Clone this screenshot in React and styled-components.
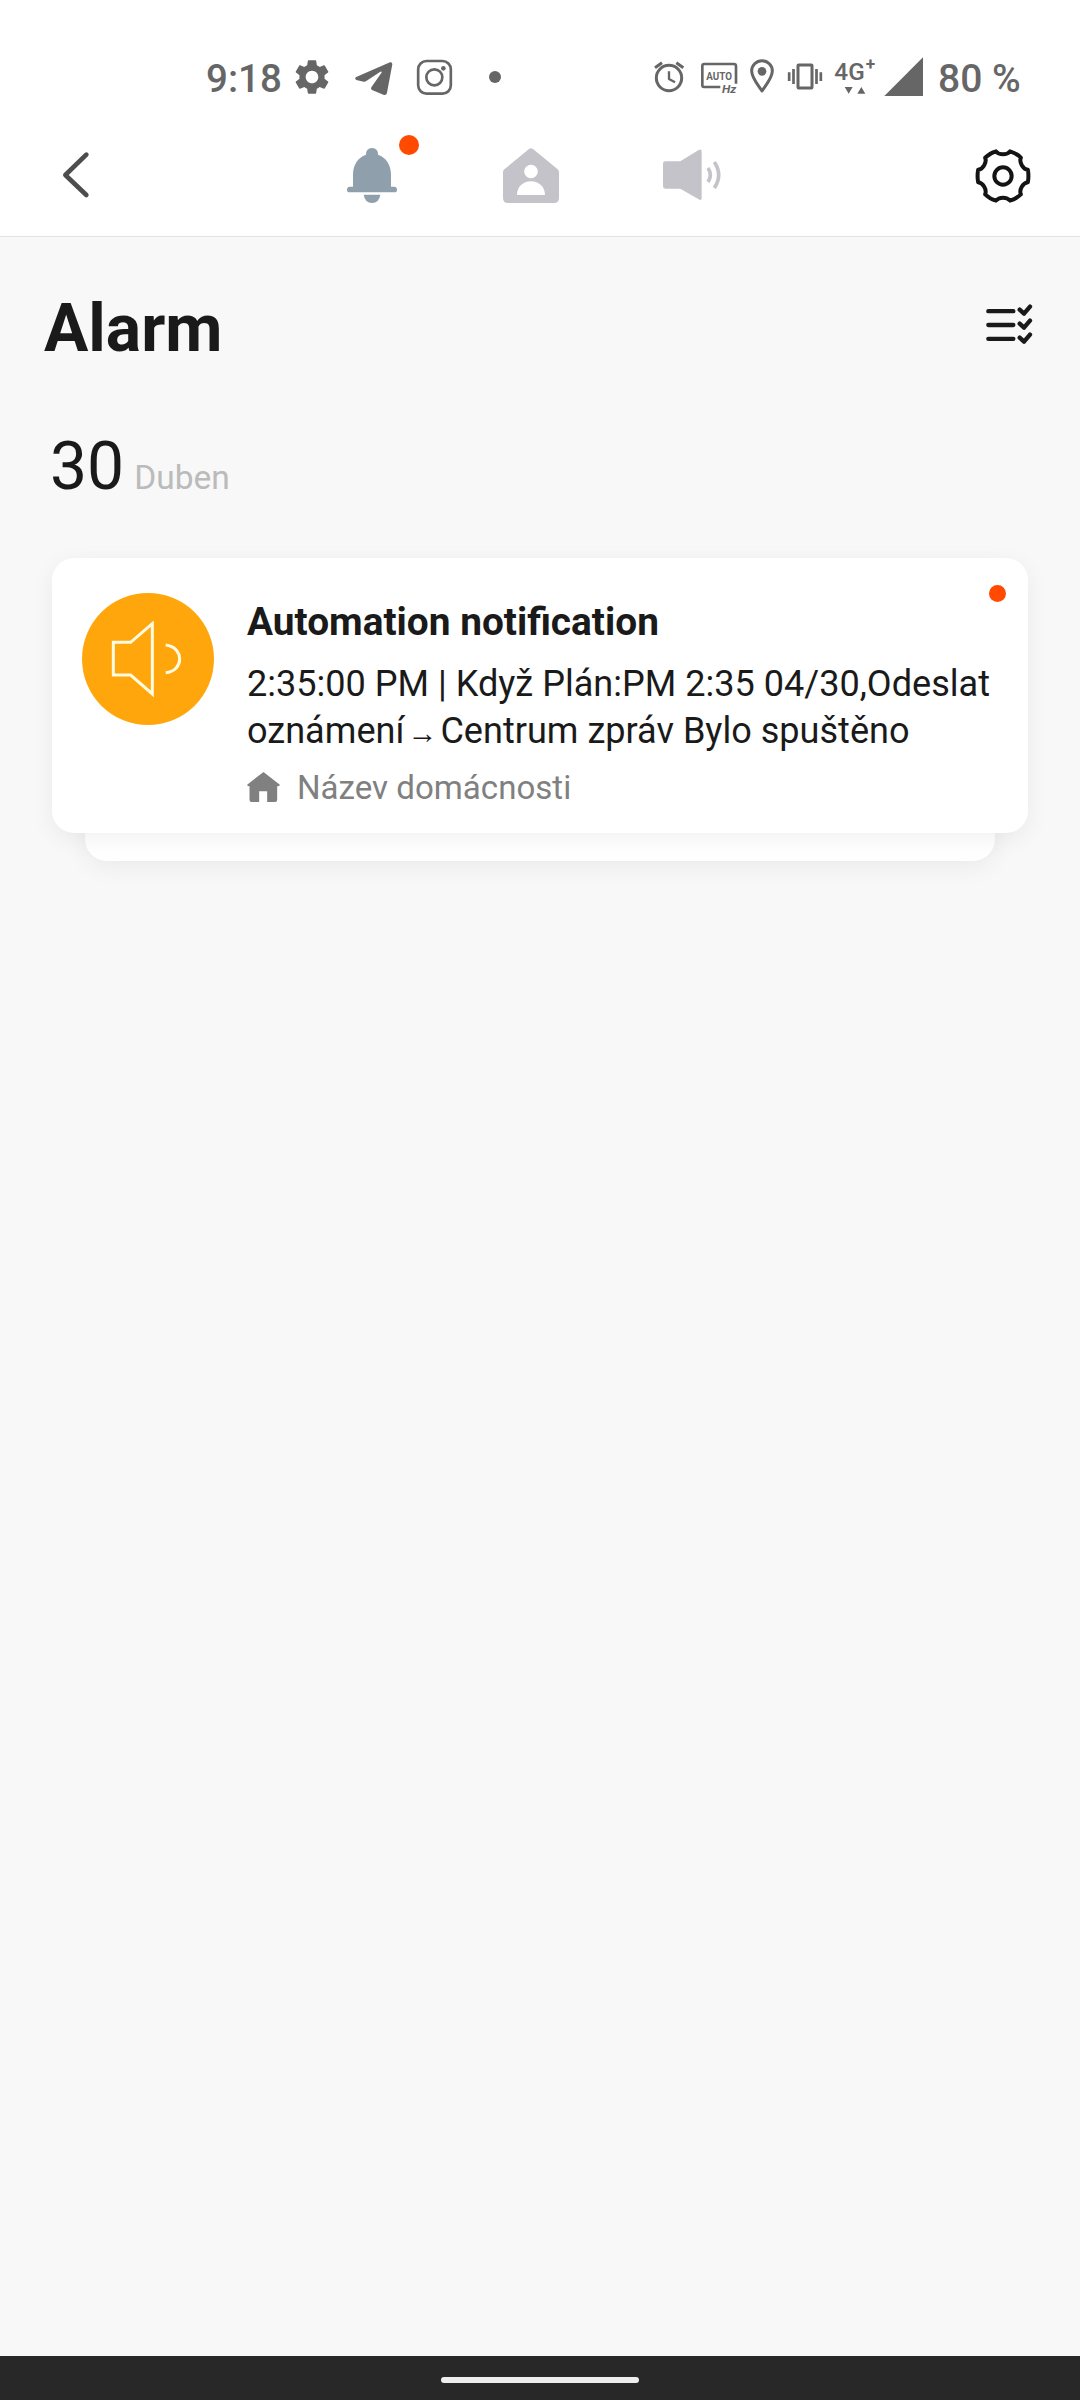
import React from 'react'
import styled, { createGlobalStyle } from 'styled-components'
import { MdSettings } from 'react-icons/md'

function App() {
  return (
    <Screen>
      <GlobalStyle />
      <Header>
        <StatusBar />
        <Toolbar />
      </Header>

      <Main>
        <TitleRow>
          <h1>Alarm</h1>
          <ReadAllButton aria-label="Select">
            <svg width="47" height="40" viewBox="139 522 141 120">
              <path d="M146 543.500H221M146 585H221M146 626.500H221" strokeWidth="13" />
              <path d="M240 539l13 12 18-21M240 581l13 12 18-21M240 623l13 12 18-21" strokeWidth="13" />
            </svg>
          </ReadAllButton>
        </TitleRow>

        <DateRow>
          <Day>30</Day>
          <Month>Duben</Month>
        </DateRow>

        <CardStack>
          <Card>
            <Avatar>
              <svg width="72" height="76" viewBox="214 244 216 228">
                <path d="M221 308H273L338 252V463L273 406H221Z" />
                <path d="M378 316C434 322 434 394 378 399" />
              </svg>
            </Avatar>
            <Content>
              <h2>Automation notification</h2>
              <Description>
                <Line>2:35:00 PM | Když Plán:PM 2:35 04/30,Odeslat</Line>
                <Line>
                  <span>oznámení</span>
                  <Arrow>→</Arrow>
                  <span>Centrum zpráv Bylo spuštěno</span>
                </Line>
              </Description>
              <Household>
                <svg width="33" height="30" viewBox="0 0 98 90">
                  <path d="M49 0L98 38Q98 43 90 43V84Q90 90 84 90H60V58H36V90H13Q7 90 7 84V43Q0 43 0 38Z" />
                </svg>
                <span>Název domácnosti</span>
              </Household>
            </Content>
            <UnreadDot />
          </Card>
          <CardBehind />
        </CardStack>
      </Main>

      <NavBar>
        <HomeIndicator />
      </NavBar>
    </Screen>
  )
}

function StatusBar() {
  return (
    <StatusRow>
      <Clock>9:18</Clock>
      <GearIcon />
      <StatusIcon $left={21} width="40" height="44" viewBox="492 45 120 132">
        <path d="M497 112Q493 117 499 120L521 125Q525 126 530 122L571 95Q578 93 574 99L544 142Q541 147 546 150L582 165Q590 166 591 158L607 73Q607 66 600 67Z" />
      </StatusIcon>
      <StatusIcon $left={21} width="38" height="44" viewBox="675 45 114 132">
        <Stroke $w={8}>
          <rect x="684.500" y="63" width="98" height="98" rx="25" />
          <circle cx="733" cy="112" r="24" />
        </Stroke>
        <circle cx="760" cy="85" r="7" />
      </StatusIcon>
      <MoreDot />

      <Right>
        <StatusIcon width="34" height="44" viewBox="39 45 102 132">
          <Stroke $w={9}>
            <circle cx="87" cy="114" r="38" />
            <path d="M45 83L66 68M109 68L130 83" />
            <path d="M87 94V117L105 127" strokeWidth="7" />
          </Stroke>
        </StatusIcon>
        <StatusIcon $left={13} width="38" height="44" viewBox="180 45 114 132">
          <Stroke $w={8}>
            <path d="M241 141H192Q187 141 187 135V78Q187 72 193 72H282Q288 72 288 78V131" />
          </Stroke>
          <text x="199" y="119" fontSize="34" fontWeight="700" textLength="77" lengthAdjust="spacingAndGlyphs">AUTO</text>
          <text x="246" y="159" fontSize="35" fontWeight="700" fontStyle="italic" textLength="43" lengthAdjust="spacingAndGlyphs">Hz</text>
        </StatusIcon>
        <StatusIcon $left={11} width="26" height="44" viewBox="327 45 78 132">
          <Stroke $w={9}>
            <path d="M366 153C352 132 335 113 335 93A31 31 0 0 1 397 93C397 113 380 132 366 153Z" />
          </Stroke>
          <circle cx="366" cy="94" r="13" />
        </StatusIcon>
        <StatusIcon $left={12} width="36" height="44" viewBox="441 45 108 132">
          <Stroke $w={9}>
            <rect x="474" y="75" width="42" height="69" rx="2" />
            <path d="M447.500 97V123M460.500 87V132M529.500 87V132M542.500 97V123" strokeWidth="8" />
          </Stroke>
        </StatusIcon>
        <StatusIcon $left={10} width="42" height="44" viewBox="579 45 126 132">
          <text x="583" y="120" fontSize="73">4G</text>
          <text x="677" y="91" fontSize="52" fontWeight="700">+</text>
          <path d="M614 141H638L626 161ZM652 161H676L664 141Z" />
        </StatusIcon>
        <StatusIcon $left={8} width="41" height="44" viewBox="729 45 123 132">
          <path d="M733 168L849 52V168Z" />
        </StatusIcon>
        <Battery>80 %</Battery>
      </Right>
    </StatusRow>
  )
}

function Toolbar() {
  return (
    <ToolbarRow>
      <BackButton aria-label="Back">
        <svg width="30" height="50" viewBox="66 58 90 150">
          <path d="M139 72L76 133L139 193" />
        </svg>
      </BackButton>
      <Tabs>
        <Tab $active>
          <svg width="52" height="55" viewBox="0 0 156 165">
            <path d="M57 20Q57 0 75 0Q93 0 93 20C118 29 132 50 132 82V116H142Q150 117 150 125Q150 133 142 133H8Q0 133 0 125Q0 117 8 116H18V82C18 50 32 29 57 20Z" />
            <path d="M50 140H100Q96 165 75 165Q54 165 50 140Z" />
          </svg>
          <Badge />
        </Tab>
        <Tab>
          <svg width="56" height="55" viewBox="0 0 168 165">
            <path
              fillRule="evenodd"
              d="M78 3Q84 -2 90 3L164 64Q168 67 168 73V150Q168 165 153 165H15Q0 165 0 150V73Q0 67 4 64ZM84 50A20.500 20.500 0 1 0 84 91A20.500 20.500 0 1 0 84 50ZM42 141H126C126 86 42 86 42 141Z"
            />
          </svg>
        </Tab>
        <Tab>
          <svg width="60" height="52" viewBox="0 0 180 156">
            <path d="M7 37H52L107 3Q116 -1 116 8V146Q116 156 107 151L52 119H7Q0 119 0 112V44Q0 37 7 37Z" />
            <Stroke $w={11}>
              <path d="M135 57Q149 78 135 99" />
              <path d="M154 39Q180 78 154 117" />
            </Stroke>
          </svg>
        </Tab>
      </Tabs>
      <SettingsButton aria-label="Settings">
        <svg width="56" height="56" viewBox="-84 -84 168 168">
          <path d="M-21 -74C-12 -62 12 -62 21 -74Q39 -69 53.600 -55.200C47.700 -41.400 59.700 -20.600 74.600 -18.800Q78 0 74.600 18.800C59.700 20.600 47.700 41.400 53.600 55.200Q39 69 21 74C12 62 -12 62 -21 74Q-39 69 -53.600 55.200C-47.700 41.400 -59.700 20.600 -74.600 18.800Q-78 0 -74.600 -18.800C-59.700 -20.600 -47.700 -41.400 -53.600 -55.200Q-39 -69 -21 -74Z" />
          <circle r="26" />
        </svg>
      </SettingsButton>
    </ToolbarRow>
  )
}

export default App

const GlobalStyle = createGlobalStyle`
  * {
    box-sizing: border-box;
  }

  body {
    margin: 0;
    background: #f8f8f8;
    font-family: Roboto, "Noto Sans", sans-serif;
  }

  h1, h2, p {
    margin: 0;
  }

  button {
    padding: 0;
    border: none;
    background: none;
  }

  svg {
    display: block;
    flex-shrink: 0;
  }
`

const Screen = styled.div`
  width: 1080px;
  height: 2400px;
  display: flex;
  flex-direction: column;
  overflow: hidden;
`

const Header = styled.header`
  height: 237px;
  background: #fff;
  border-bottom: 1px solid #e3e3e3;
`

const StatusRow = styled.div`
  height: 112px;
  padding: 42px 60px 0 206px;
  display: flex;
  align-items: center;
  color: #666;
`

const Clock = styled.span`
  width: 85px;
  padding-top: 3px;
  font-size: 38.5px;
  font-weight: 500;
  line-height: 44px;
  white-space: nowrap;
`

const GearIcon = styled(MdSettings)`
  width: 42px;
  height: 42px;
`

const StatusIcon = styled.svg`
  margin-left: ${(props) => props.$left || 0}px;
  fill: currentColor;
  font-weight: 500;
`

const Stroke = styled.g`
  fill: none;
  stroke: currentColor;
  stroke-width: ${(props) => props.$w};
  stroke-linejoin: round;
`

const MoreDot = styled.i`
  width: 12px;
  height: 12px;
  margin-left: 36px;
  border-radius: 50%;
  background: currentColor;
`

const Right = styled.div`
  margin-left: auto;
  display: flex;
  align-items: center;
`

const Battery = styled.span`
  width: 82px;
  margin-left: 14px;
  padding-top: 3px;
  font-size: 39px;
  font-weight: 500;
  line-height: 44px;
  white-space: nowrap;
`

const ToolbarRow = styled.div`
  height: 124px;
  padding: 2px 49px 0 62px;
  display: flex;
  align-items: center;
`

const BackButton = styled.button`
  svg {
    fill: none;
    stroke: #4d4d4d;
    stroke-width: 14px;
    stroke-linecap: round;
    stroke-linejoin: round;
  }
`

const Tabs = styled.nav`
  margin-left: 255px;
  display: flex;
  align-items: center;
  gap: 104px;
`

const Tab = styled.div`
  position: relative;
  color: ${(props) => (props.$active ? '#8f9fac' : '#c3c3c9')};

  > svg > path {
    fill: currentColor;
  }
`

const Badge = styled.i`
  position: absolute;
  top: -13px;
  right: -20px;
  width: 20px;
  height: 20px;
  border-radius: 50%;
  background: #ff4a00;
`

const SettingsButton = styled.button`
  margin-left: auto;
  margin-top: 2px;

  svg {
    fill: none;
    stroke: #141414;
    stroke-width: 12px;
    stroke-linejoin: round;
  }
`

const Main = styled.main`
  flex: 1;
  color: #1a1a1a;
`

const TitleRow = styled.div`
  height: 130px;
  padding: 47px 47px 0 44px;
  display: flex;
  justify-content: space-between;
  align-items: flex-start;

  h1 {
    font-size: 66px;
    font-weight: 700;
    line-height: 90px;
  }
`

const ReadAllButton = styled.button`
  margin-top: 20px;

  svg {
    fill: none;
    stroke: #1a1a1a;
    stroke-linecap: round;
    stroke-linejoin: round;
  }
`

const DateRow = styled.div`
  height: 191px;
  padding: 55px 50px 0;
  display: flex;
  align-items: baseline;
`

const Day = styled.span`
  font-size: 66px;
  line-height: 90px;
`

const Month = styled.span`
  margin-left: 10px;
  font-size: 33.5px;
  color: #bbb;
`

const CardStack = styled.section`
  padding: 0 52px;
`

const Card = styled.article`
  position: relative;
  z-index: 1;
  height: 275px;
  padding: 35px 30px 0;
  display: flex;
  align-items: flex-start;
  border-radius: 22px;
  background: #fff;
  box-shadow: 0 6px 24px rgba(0, 0, 0, 0.06);
`

const CardBehind = styled.div`
  height: 50px;
  margin: -22px 33px 0;
  border-radius: 0 0 22px 22px;
  background: #fff;
  box-shadow: 0 6px 24px rgba(0, 0, 0, 0.06);
`

const Avatar = styled.div`
  flex-shrink: 0;
  width: 132px;
  height: 132px;
  display: flex;
  align-items: center;
  justify-content: center;
  border-radius: 50%;
  background: #ffa60c;

  svg {
    margin-right: 2px;
    fill: none;
    stroke: #fffbe0;
    stroke-width: 9px;
  }
`

const Content = styled.div`
  width: 750px;
  margin-left: 33px;

  h2 {
    padding-top: 6px;
    font-size: 38.8px;
    font-weight: 700;
    line-height: 46px;
  }
`

const Description = styled.div`
  margin-top: 16px;
  font-size: 36.1px;
  line-height: 47px;
`

const Line = styled.p`
  display: flex;
  align-items: baseline;
  height: 47px;
  white-space: nowrap;
`

const Arrow = styled.span`
  margin: 0 3px;
  font-family: "Liberation Serif", serif;
  font-size: 30px;
  line-height: 1;
`

const Household = styled.div`
  margin-top: 10px;
  display: flex;
  align-items: center;
  gap: 17px;
  font-size: 33.1px;
  line-height: 46px;
  color: #808080;

  svg {
    margin-bottom: 2px;
    fill: currentColor;
  }
`

const UnreadDot = styled.i`
  position: absolute;
  top: 27px;
  right: 22px;
  width: 17px;
  height: 17px;
  border-radius: 50%;
  background: #ff4a00;
`

const NavBar = styled.footer`
  height: 44px;
  padding-top: 21px;
  background: #282828;
`

const HomeIndicator = styled.div`
  width: 198px;
  height: 6px;
  margin: 0 auto;
  border-radius: 3px;
  background: #eee;
`
